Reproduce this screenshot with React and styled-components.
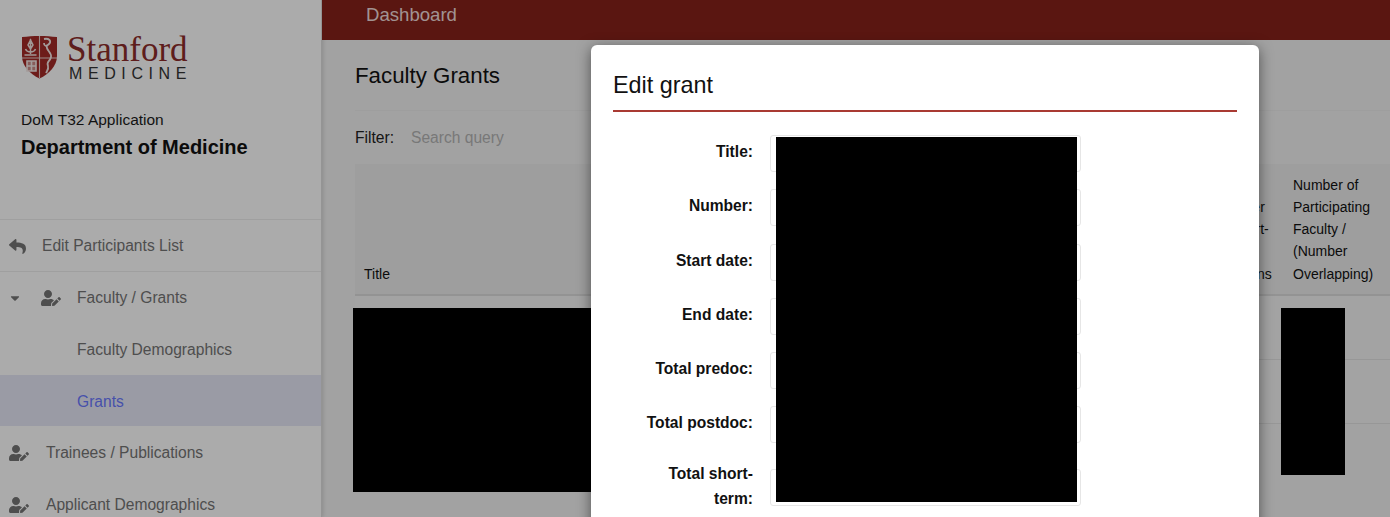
import styled, { createGlobalStyle } from 'styled-components';
import { FaReply, FaCaretDown, FaUserEdit } from 'react-icons/fa';

const GlobalStyle = createGlobalStyle`
  html, body {
    margin: 0;
    height: 100%;
    overflow: hidden;
    font-family: "Liberation Sans", Arial, sans-serif;
  }
`;

const Shield = () => (
  <svg width="37" height="44" viewBox="0 0 37 44">
    <path d="M1 2C12 0.500 25 0.500 36 2V21C36 31 28 39 18.500 43.500C9 39 1 31 1 21Z" fill="#a32a27" />
    <path d="M18.500 1V43M1 23H36" stroke="#e6cfcb" strokeWidth="1.100" />
    <path d="M9.500 4V19M9.500 5L7 10L9.500 14L12 10ZM4.500 14C6 18 13 18 14.500 14M3.500 20H15.500" stroke="#efe2df" strokeWidth="1.500" fill="none" />
    <path d="M23 4C28 3 31 6 28 9C25 12 23 11 23 8M26 10C24 15 31 17 30 22C29 27 25 26 27 31C28 34 26 36 25 38" stroke="#f4e8e6" strokeWidth="1.800" fill="none" />
    <path d="M6 26H15V36H6ZM10.500 26V36M6 31H15" stroke="#f4e8e6" strokeWidth="1.600" fill="#c98a86" />
  </svg>
);

export default function App() {
  return (
    <Page>
      <GlobalStyle />
      <Sidebar>
        <Brand>
          <Logo>
            <Shield />
            <Wordmark>
              <Stanford>Stanford</Stanford>
              <Medicine>MEDICINE</Medicine>
            </Wordmark>
          </Logo>
          <AppName>DoM T32 Application</AppName>
          <Department>Department of Medicine</Department>
        </Brand>
        <Nav>
          <NavRow $left={9} $gap={16} $bordered>
            <FaReply size={17} />
            <span>Edit Participants List</span>
          </NavRow>
          <NavRow $left={8} $gap={16}>
            <Caret size={14} />
            <FaUserEdit size={20} />
            <span>Faculty / Grants</span>
          </NavRow>
          <NavRow $left={77}>
            <span>Faculty Demographics</span>
          </NavRow>
          <NavRow $left={77} $active>
            <span>Grants</span>
          </NavRow>
          <NavRow $left={9} $gap={17}>
            <FaUserEdit size={20} />
            <span>Trainees / Publications</span>
          </NavRow>
          <NavRow $left={9} $gap={17}>
            <FaUserEdit size={20} />
            <span>Applicant Demographics</span>
          </NavRow>
        </Nav>
      </Sidebar>
      <Main>
        <TopBar>Dashboard</TopBar>
        <Heading>Faculty Grants</Heading>
        <FilterRow>
          <FilterLabel>Filter:</FilterLabel>
          <FilterInput placeholder="Search query" />
        </FilterRow>
        <GrantsTable>
          <colgroup>
            <col style={{ width: 850 }} />
            <col style={{ width: 78 }} />
            <col />
          </colgroup>
          <thead>
            <tr>
              <Th>Title</Th>
              <Th>Number of Short-term Positions</Th>
              <Th>Number of Participating Faculty / (Number Overlapping)</Th>
            </tr>
          </thead>
          <tbody>
            <Tr><td /><td /><td /></Tr>
            <Tr><td /><td /><td /></Tr>
          </tbody>
        </GrantsTable>
      </Main>
      <Backdrop />
      <TitleRedaction />
      <CountRedaction />
      <Modal>
        <ModalTitle>Edit grant</ModalTitle>
        <Form>
          <Field label="Title:" />
          <Field label="Number:" />
          <Field label="Start date:" />
          <Field label="End date:" />
          <Field label="Total predoc:" />
          <Field label="Total postdoc:" />
          <Field label="Total short-term:" />
        </Form>
        <FormRedaction />
      </Modal>
    </Page>
  );
}

const Field = ({ label }) => (
  <FieldRow>
    <FieldLabel>{label}</FieldLabel>
    <FieldInput />
  </FieldRow>
);

const Page = styled.div`
  position: relative;
  display: flex;
  height: 517px;
  overflow: hidden;
  background: #f2f2f2;
`;

const Sidebar = styled.aside`
  width: 321px;
  flex-shrink: 0;
  background: #fff;
  border-right: 1px solid #ddd;
  box-shadow: 1px 0 4px rgba(0, 0, 0, 0.15);
`;

const Brand = styled.div`
  height: 219px;
  box-sizing: border-box;
  padding: 35px 21px 0;
`;

const Logo = styled.div`
  display: flex;
  gap: 9px;
  height: 44px;
`;

const Wordmark = styled.div`
  display: flex;
  flex-direction: column;
  align-items: flex-start;
`;

const Stanford = styled.div`
  font-family: "Liberation Serif", serif;
  font-size: 35px;
  line-height: 30px;
  color: #8c2c2a;
`;

const Medicine = styled.div`
  margin: 1px 0 0 2px;
  font-size: 16px;
  line-height: 15px;
  letter-spacing: 5.6px;
  color: #333;
`;

const AppName = styled.div`
  margin-top: 31px;
  font-size: 15.500px;
  line-height: 20px;
  color: #1c1c1c;
`;

const Department = styled.div`
  margin-top: 5px;
  font-size: 20px;
  line-height: 24px;
  font-weight: 700;
  color: #111;
`;

const Nav = styled.nav`
  border-top: 1px solid #eee;
`;

const NavRow = styled.div`
  height: 51.6px;
  box-sizing: border-box;
  display: flex;
  align-items: center;
  gap: ${(p) => p.$gap || 0}px;
  padding-left: ${(p) => p.$left}px;
  padding-top: 2px;
  font-size: 15.600px;
  color: ${(p) => (p.$active ? '#6a78ff' : '#757575')};
  background: ${(p) => (p.$active ? '#e6e8f6' : 'transparent')};
  border-bottom: ${(p) => (p.$bordered ? '1px solid #eee' : 'none')};

  svg {
    flex-shrink: 0;
    color: #757575;
  }
`;

const Caret = styled(FaCaretDown)`
  margin-right: 3px;
`;

const Main = styled.main`
  flex: 1;
  min-width: 0;
`;

const TopBar = styled.header`
  height: 40px;
  box-sizing: border-box;
  padding: 3px 0 0 44px;
  background: #86211a;
  color: #f0dcda;
  font-size: 18.600px;
  line-height: 24px;
`;

const Heading = styled.h1`
  height: 71px;
  margin: 0 0 0 33px;
  box-sizing: border-box;
  padding-top: 22px;
  border-bottom: 1px solid #ececec;
  font-size: 22.300px;
  line-height: 28px;
  font-weight: 400;
  color: #111;
`;

const FilterRow = styled.div`
  height: 53px;
  box-sizing: border-box;
  padding-top: 1px;
  margin-left: 33px;
  display: flex;
  align-items: center;
  gap: 17px;
`;

const FilterLabel = styled.label`
  font-size: 15.600px;
  color: #222;
`;

const FilterInput = styled.input`
  border: none;
  outline: none;
  background: transparent;
  padding: 0;
  font-family: inherit;
  font-size: 15.600px;

  &::placeholder {
    color: #b4b4b4;
  }
`;

const GrantsTable = styled.table`
  width: 1036px;
  margin-left: 33px;
  table-layout: fixed;
  border-collapse: collapse;
  background: #ececec;
`;

const Th = styled.th`
  height: 131px;
  box-sizing: border-box;
  padding: 0 10px 9px;
  vertical-align: bottom;
  text-align: left;
  font-size: 14px;
  line-height: 22.300px;
  font-weight: 400;
  color: #111;
  border-bottom: 2px solid #dcdcdc;
  &:first-child {
    padding-left: 9px;
  }
`;

const Tr = styled.tr`
  height: 64px;
  background: #f4f4f4;
  border-bottom: 1px solid #e2e2e2;
`;

const Backdrop = styled.div`
  position: absolute;
  inset: 0;
  background: rgba(0, 0, 0, 0.33);
`;

const TitleRedaction = styled.div`
  position: absolute;
  left: 353px;
  top: 308px;
  width: 238px;
  height: 184px;
  background: #000;
`;

const CountRedaction = styled.div`
  position: absolute;
  left: 1281px;
  top: 308px;
  width: 64px;
  height: 167px;
  background: #000;
`;

const Modal = styled.section`
  position: absolute;
  left: 591px;
  top: 45px;
  width: 668px;
  height: 520px;
  box-sizing: border-box;
  padding: 0 22px;
  background: #fff;
  border-radius: 6px;
  box-shadow: 0 3px 14px rgba(0, 0, 0, 0.5);
`;

const ModalTitle = styled.h2`
  height: 67px;
  margin: 0;
  box-sizing: border-box;
  padding-top: 25px;
  border-bottom: 2px solid #a93a33;
  font-size: 23.400px;
  line-height: 30px;
  font-weight: 400;
  color: #111;
`;

const Form = styled.form`
  display: flex;
  flex-direction: column;
  gap: 17.300px;
  padding-top: 23px;
`;

const FieldRow = styled.div`
  display: flex;
  align-items: center;
  gap: 17px;
`;

const FieldLabel = styled.label`
  width: 140px;
  box-sizing: border-box;
  padding: 0 0 4px 25px;
  text-align: right;
  font-size: 15.600px;
  line-height: 25px;
  font-weight: 700;
  color: #111;
`;

const FieldInput = styled.div`
  width: 311px;
  height: 37px;
  box-sizing: border-box;
  border: 1px solid #e6e6e6;
  border-radius: 3px;
`;

const FormRedaction = styled.div`
  position: absolute;
  left: 185px;
  top: 92px;
  width: 301px;
  height: 365px;
  background: #000;
`;
